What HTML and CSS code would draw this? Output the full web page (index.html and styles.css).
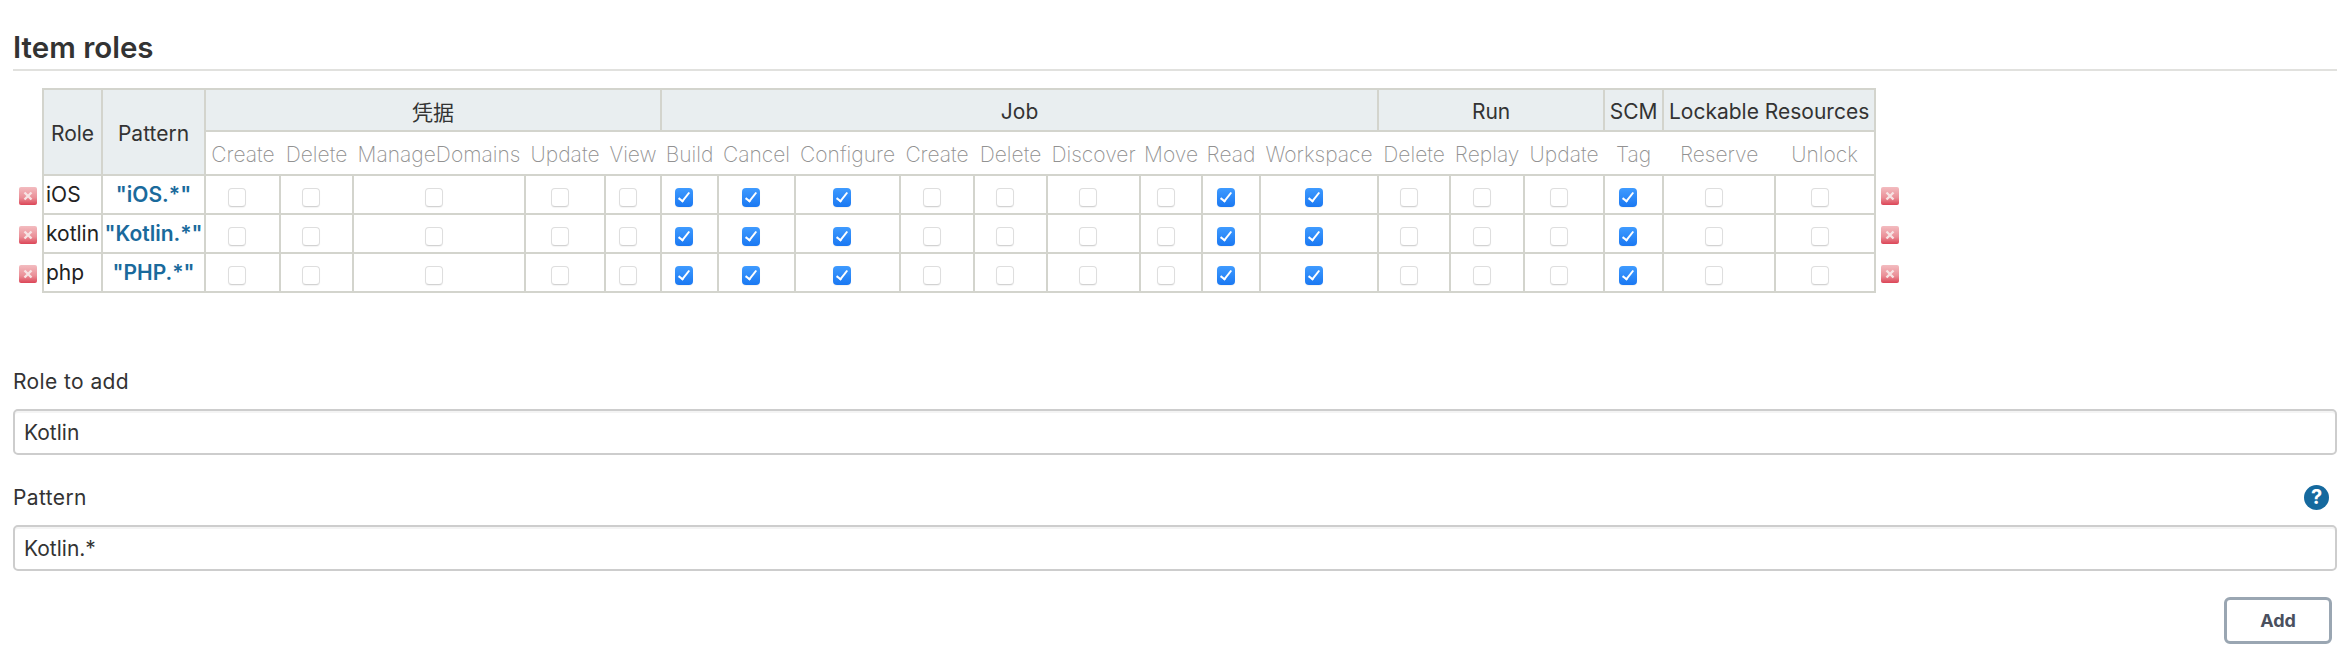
FILE: index.html
```html
<!DOCTYPE html>
<html lang="en">
<head>
    <meta charset="UTF-8">
    <meta name="viewport" content="width=device-width, initial-scale=1.0">
    <title>Item roles</title>
    <link rel="stylesheet" href="styles.css">
</head>
<body>
    <svg class="sprites" width="0" height="0">
        <defs>
            <linearGradient id="redFill" x1="0" y1="0" x2="0" y2="1">
                <stop offset="0" stop-color="#f3bcc0"/>
                <stop offset="0.6" stop-color="#ea8f97"/>
                <stop offset="1" stop-color="#dc4557"/>
            </linearGradient>
            <symbol id="icon-delete" viewBox="0 0 18 18">
                <rect width="18" height="18" rx="2" fill="url(#redFill)"/>
                <path d="M5.5 5.5 12.5 12.5M12.5 5.5 5.5 12.5" stroke="#f7e3e3" stroke-width="2.4" fill="none"/>
            </symbol>
        </defs>
    </svg>

    <h2 class="section-title">Item roles</h2>

    <table class="role-table">
        <colgroup>
            <col class="w30"><col class="w59"><col class="w103">
            <col class="w75"><col class="w73"><col class="w172"><col class="w80"><col class="w56">
            <col class="w57"><col class="w77"><col class="w105"><col class="w74"><col class="w73"><col class="w93"><col class="w62"><col class="w58"><col class="w118">
            <col class="w72"><col class="w74"><col class="w80">
            <col class="w59">
            <col class="w112"><col class="w100">
            <col class="w30">
        </colgroup>
        <thead>
            <tr class="group-row">
                <th class="plain" rowspan="2"></th>
                <th rowspan="2">Role</th>
                <th rowspan="2">Pattern</th>
                <th colspan="5">凭据</th>
                <th colspan="9">Job</th>
                <th colspan="3">Run</th>
                <th>SCM</th>
                <th colspan="2">Lockable Resources</th>
                <th class="plain" rowspan="2"></th>
            </tr>
            <tr class="perm-row">
                <th>Create</th><th>Delete</th><th>ManageDomains</th><th>Update</th><th>View</th>
                <th>Build</th><th>Cancel</th><th>Configure</th><th>Create</th><th>Delete</th><th>Discover</th><th>Move</th><th>Read</th><th>Workspace</th>
                <th>Delete</th><th>Replay</th><th>Update</th>
                <th>Tag</th>
                <th>Reserve</th><th class="last">Unlock</th>
            </tr>
        </thead>
        <tbody>
            <tr>
                <td class="plain start"><svg class="del"><use href="#icon-delete"/></svg></td>
                <td class="role-name">iOS</td>
                <td class="pattern"><a href="#">"iOS.*"</a></td>
                <td><input type="checkbox"></td><td><input type="checkbox"></td><td><input type="checkbox"></td><td><input type="checkbox"></td><td><input type="checkbox"></td>
                <td><input type="checkbox" checked></td><td><input type="checkbox" checked></td><td><input type="checkbox" checked></td><td><input type="checkbox"></td><td><input type="checkbox"></td><td><input type="checkbox"></td><td><input type="checkbox"></td><td><input type="checkbox" checked></td><td><input type="checkbox" checked></td>
                <td><input type="checkbox"></td><td><input type="checkbox"></td><td><input type="checkbox"></td>
                <td><input type="checkbox" checked></td>
                <td><input type="checkbox"></td><td><input type="checkbox"></td>
                <td class="plain end"><svg class="del"><use href="#icon-delete"/></svg></td>
            </tr>
            <tr>
                <td class="plain start"><svg class="del"><use href="#icon-delete"/></svg></td>
                <td class="role-name">kotlin</td>
                <td class="pattern"><a href="#">"Kotlin.*"</a></td>
                <td><input type="checkbox"></td><td><input type="checkbox"></td><td><input type="checkbox"></td><td><input type="checkbox"></td><td><input type="checkbox"></td>
                <td><input type="checkbox" checked></td><td><input type="checkbox" checked></td><td><input type="checkbox" checked></td><td><input type="checkbox"></td><td><input type="checkbox"></td><td><input type="checkbox"></td><td><input type="checkbox"></td><td><input type="checkbox" checked></td><td><input type="checkbox" checked></td>
                <td><input type="checkbox"></td><td><input type="checkbox"></td><td><input type="checkbox"></td>
                <td><input type="checkbox" checked></td>
                <td><input type="checkbox"></td><td><input type="checkbox"></td>
                <td class="plain end"><svg class="del"><use href="#icon-delete"/></svg></td>
            </tr>
            <tr>
                <td class="plain start"><svg class="del"><use href="#icon-delete"/></svg></td>
                <td class="role-name">php</td>
                <td class="pattern"><a href="#">"PHP.*"</a></td>
                <td><input type="checkbox"></td><td><input type="checkbox"></td><td><input type="checkbox"></td><td><input type="checkbox"></td><td><input type="checkbox"></td>
                <td><input type="checkbox" checked></td><td><input type="checkbox" checked></td><td><input type="checkbox" checked></td><td><input type="checkbox"></td><td><input type="checkbox"></td><td><input type="checkbox"></td><td><input type="checkbox"></td><td><input type="checkbox" checked></td><td><input type="checkbox" checked></td>
                <td><input type="checkbox"></td><td><input type="checkbox"></td><td><input type="checkbox"></td>
                <td><input type="checkbox" checked></td>
                <td><input type="checkbox"></td><td><input type="checkbox"></td>
                <td class="plain end"><svg class="del"><use href="#icon-delete"/></svg></td>
            </tr>
        </tbody>
    </table>

    <form class="add-form">
        <!-- Role name -->
        <div class="field field-role">
            <div class="field-head">
                <label for="role_name">Role to add</label>
            </div>
            <input type="text" id="role_name" value="Kotlin">
        </div>

        <!-- Pattern -->
        <div class="field field-pattern">
            <div class="field-head">
                <label for="role_pattern">Pattern</label>
                <a class="help" href="#">?</a>
            </div>
            <input type="text" id="role_pattern" value="Kotlin.*">
        </div>

        <div class="actions">
            <button type="button">Add</button>
        </div>
    </form>
</body>
</html>
```

FILE: styles.css
```css
body {
    background-color: white;
    color: #333;
    font-family: Inter, "Noto Sans CJK SC", sans-serif;
    margin: 0;
    padding: 0 15px 0 13px;
}
.sprites {
    position: absolute;
}

.section-title {
    margin: 0;
    padding-top: 27px;
    height: 42px;
    line-height: 40px;
    font-size: 29.5px;
    font-weight: 600;
    color: #333;
    box-sizing: content-box;
    border-bottom: 2px solid #e1e1de;
}

/* role table */
.role-table {
    margin-top: 17px;
    border-collapse: collapse;
    table-layout: fixed;
    width: 1892px;
    font-size: 21px;
}
.w30 { width: 30px; }
.w56 { width: 56px; }
.w57 { width: 57px; }
.w58 { width: 58px; }
.w59 { width: 59px; }
.w62 { width: 62px; }
.w72 { width: 72px; }
.w73 { width: 73px; }
.w74 { width: 74px; }
.w75 { width: 75px; }
.w77 { width: 77px; }
.w80 { width: 80px; }
.w93 { width: 93px; }
.w100 { width: 100px; }
.w103 { width: 103px; }
.w105 { width: 105px; }
.w112 { width: 112px; }
.w118 { width: 118px; }
.w172 { width: 172px; }

.role-table th,
.role-table td {
    border: 2px solid #d3d4cd;
    padding: 0;
    text-align: center;
    white-space: nowrap;
}
.role-table th {
    padding-top: 2px;
    font-weight: 400;
    background-color: #e9eef0;
    color: #333;
}
.role-table .plain {
    border: none;
    background: none;
}
.group-row {
    height: 42px;
}
.perm-row {
    height: 44px;
}
.role-table .perm-row th {
    border-left: none;
    border-right: none;
    background-color: white;
    color: #929292;
    font-weight: 200;
}
.role-table .perm-row th.last {
    border-right: 2px solid #d3d4cd;
}
.role-table tbody tr {
    height: 39px;
}
.role-table td.role-name {
    text-align: left;
    padding-left: 2px;
    color: #222;
}
.pattern a {
    color: #1a6a9c;
    font-weight: 600;
    text-decoration: none;
}
.del {
    display: block;
    width: 18px;
    height: 18px;
}
.start .del {
    margin: 2px 0 0 6px;
}
.end .del {
    margin: 2px 0 0 5px;
}

/* checkboxes */
.role-table input[type="checkbox"] {
    appearance: none;
    box-sizing: border-box;
    position: relative;
    display: inline-block;
    vertical-align: middle;
    width: 18px;
    height: 19px;
    margin: 3px 11px 0 0;
    border: 1px solid #dedede;
    border-bottom-color: #d2d2d2;
    border-radius: 4px;
    background-color: white;
    box-shadow: 0 1px 1px rgba(0, 0, 0, 0.05);
}
.role-table input[type="checkbox"]:checked {
    border: none;
    background: linear-gradient(#3f9bff, #1a78f2);
}
.role-table input[type="checkbox"]:checked::after {
    content: "";
    position: absolute;
    left: 6px;
    top: 2px;
    width: 4px;
    height: 10px;
    border: solid white;
    border-width: 0 2.5px 2.5px 0;
    transform: rotate(38deg);
}

/* add form */
.add-form {
    margin-top: 70px;
}
.field {
    display: flex;
    flex-direction: column;
}
.field-head {
    display: flex;
    justify-content: space-between;
    align-items: center;
    height: 36px;
    padding-right: 8px;
}
.field-pattern {
    margin-top: 24px;
}
.field label {
    font-size: 21px;
    letter-spacing: 0.4px;
    color: #333;
}
.field input {
    box-sizing: border-box;
    height: 46px;
    margin-top: 10px;
    padding: 0 9px;
    border: 2.5px solid #cdcdcd;
    border-radius: 5px;
    font-family: inherit;
    font-size: 21px;
    color: #333;
    box-shadow: inset 0 2px 0 #f4f4f4;
}
.help {
    display: block;
    width: 25px;
    height: 25px;
    border-radius: 50%;
    background-color: #15699e;
    color: white;
    font-size: 20px;
    font-weight: 700;
    line-height: 25px;
    text-align: center;
    text-decoration: none;
}
.actions {
    display: flex;
    justify-content: flex-end;
    margin-top: 26px;
    padding-right: 5px;
}
button {
    width: 108px;
    height: 47px;
    border: 3px solid #9aa6b2;
    border-radius: 6px;
    background-color: white;
    color: #4a505e;
    font-family: inherit;
    font-size: 18px;
    font-weight: 700;
    cursor: pointer;
}
```
